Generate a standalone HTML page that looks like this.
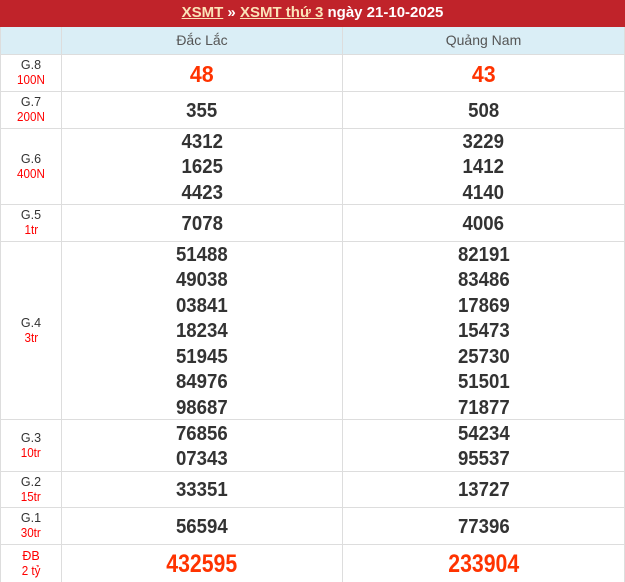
<!DOCTYPE html>
<html><head><meta charset="utf-8"><style>
*{margin:0;padding:0;box-sizing:border-box}
body{width:625px;height:575px;overflow:hidden;background:#fff;font-family:"Liberation Sans",Arial,sans-serif;position:relative}
.hd{position:absolute;left:0;top:0;width:625px;height:27px;background:#c0232a;color:#fff;font-weight:bold;font-size:15px;text-align:center;line-height:26px}
.hd u{color:#fbe3b8}
.r{position:absolute;left:0;width:625px;border-bottom:1px solid #ddd}
.c{position:absolute;top:0;bottom:0}
.l{left:0;width:62px;border-left:1px solid #ddd;border-right:1px solid #ddd;display:flex;flex-direction:column;justify-content:center;align-items:center;font-size:12.5px;color:#333;line-height:15px}
.l span{color:#f00}
.a{left:62px;width:281px;border-right:1px solid #ddd}
.b{left:343px;width:282px;border-right:1px solid #ddd}
.a,.b{display:flex;flex-direction:column;justify-content:center;align-items:center;font-weight:bold;font-size:20px;color:#333;line-height:25.4px;padding-top:3px}
.n span{display:inline-block;transform:scaleX(.93)}
.hr{top:27px;height:28px;background:#daeef6}
.hr .a,.hr .b{font-weight:normal;font-size:14px;color:#555;padding-top:1px}
.red{color:#ff3300!important}
</style></head><body>
<div class="hd"><u>XSMT</u> » <u>XSMT thứ 3</u> ngày 21-10-2025</div>
<div class="r hr"><div class="c l"></div><div class="c a">Đắc Lắc</div><div class="c b">Quảng Nam</div></div>
<div class="r n" style="top:55px;height:37px"><div class="c l">G.8<span>100N</span></div><div class="c a red" style="font-size:23px"><span>48</span></div><div class="c b red" style="font-size:23px"><span>43</span></div></div>
<div class="r n" style="top:92px;height:37px"><div class="c l">G.7<span>200N</span></div><div class="c a"><span>355</span></div><div class="c b"><span>508</span></div></div>
<div class="r n" style="top:129px;height:76px"><div class="c l">G.6<span>400N</span></div><div class="c a"><span>4312</span><span>1625</span><span>4423</span></div><div class="c b"><span>3229</span><span>1412</span><span>4140</span></div></div>
<div class="r n" style="top:205px;height:37px"><div class="c l">G.5<span>1tr</span></div><div class="c a"><span>7078</span></div><div class="c b"><span>4006</span></div></div>
<div class="r n" style="top:242px;height:178px"><div class="c l">G.4<span>3tr</span></div><div class="c a"><span>51488</span><span>49038</span><span>03841</span><span>18234</span><span>51945</span><span>84976</span><span>98687</span></div><div class="c b"><span>82191</span><span>83486</span><span>17869</span><span>15473</span><span>25730</span><span>51501</span><span>71877</span></div></div>
<div class="r n" style="top:420px;height:52px"><div class="c l">G.3<span>10tr</span></div><div class="c a"><span>76856</span><span>07343</span></div><div class="c b"><span>54234</span><span>95537</span></div></div>
<div class="r n" style="top:472px;height:36px"><div class="c l">G.2<span>15tr</span></div><div class="c a"><span>33351</span></div><div class="c b"><span>13727</span></div></div>
<div class="r n" style="top:508px;height:37px"><div class="c l">G.1<span>30tr</span></div><div class="c a"><span>56594</span></div><div class="c b"><span>77396</span></div></div>
<div class="r n" style="top:545px;height:37px;border-bottom:none"><div class="c l" style="color:#f00">ĐB<span>2 tỷ</span></div><div class="c a red" style="font-size:25px"><span style="transform:scaleX(.85)">432595</span></div><div class="c b red" style="font-size:25px"><span style="transform:scaleX(.85)">233904</span></div></div>
</body></html>
